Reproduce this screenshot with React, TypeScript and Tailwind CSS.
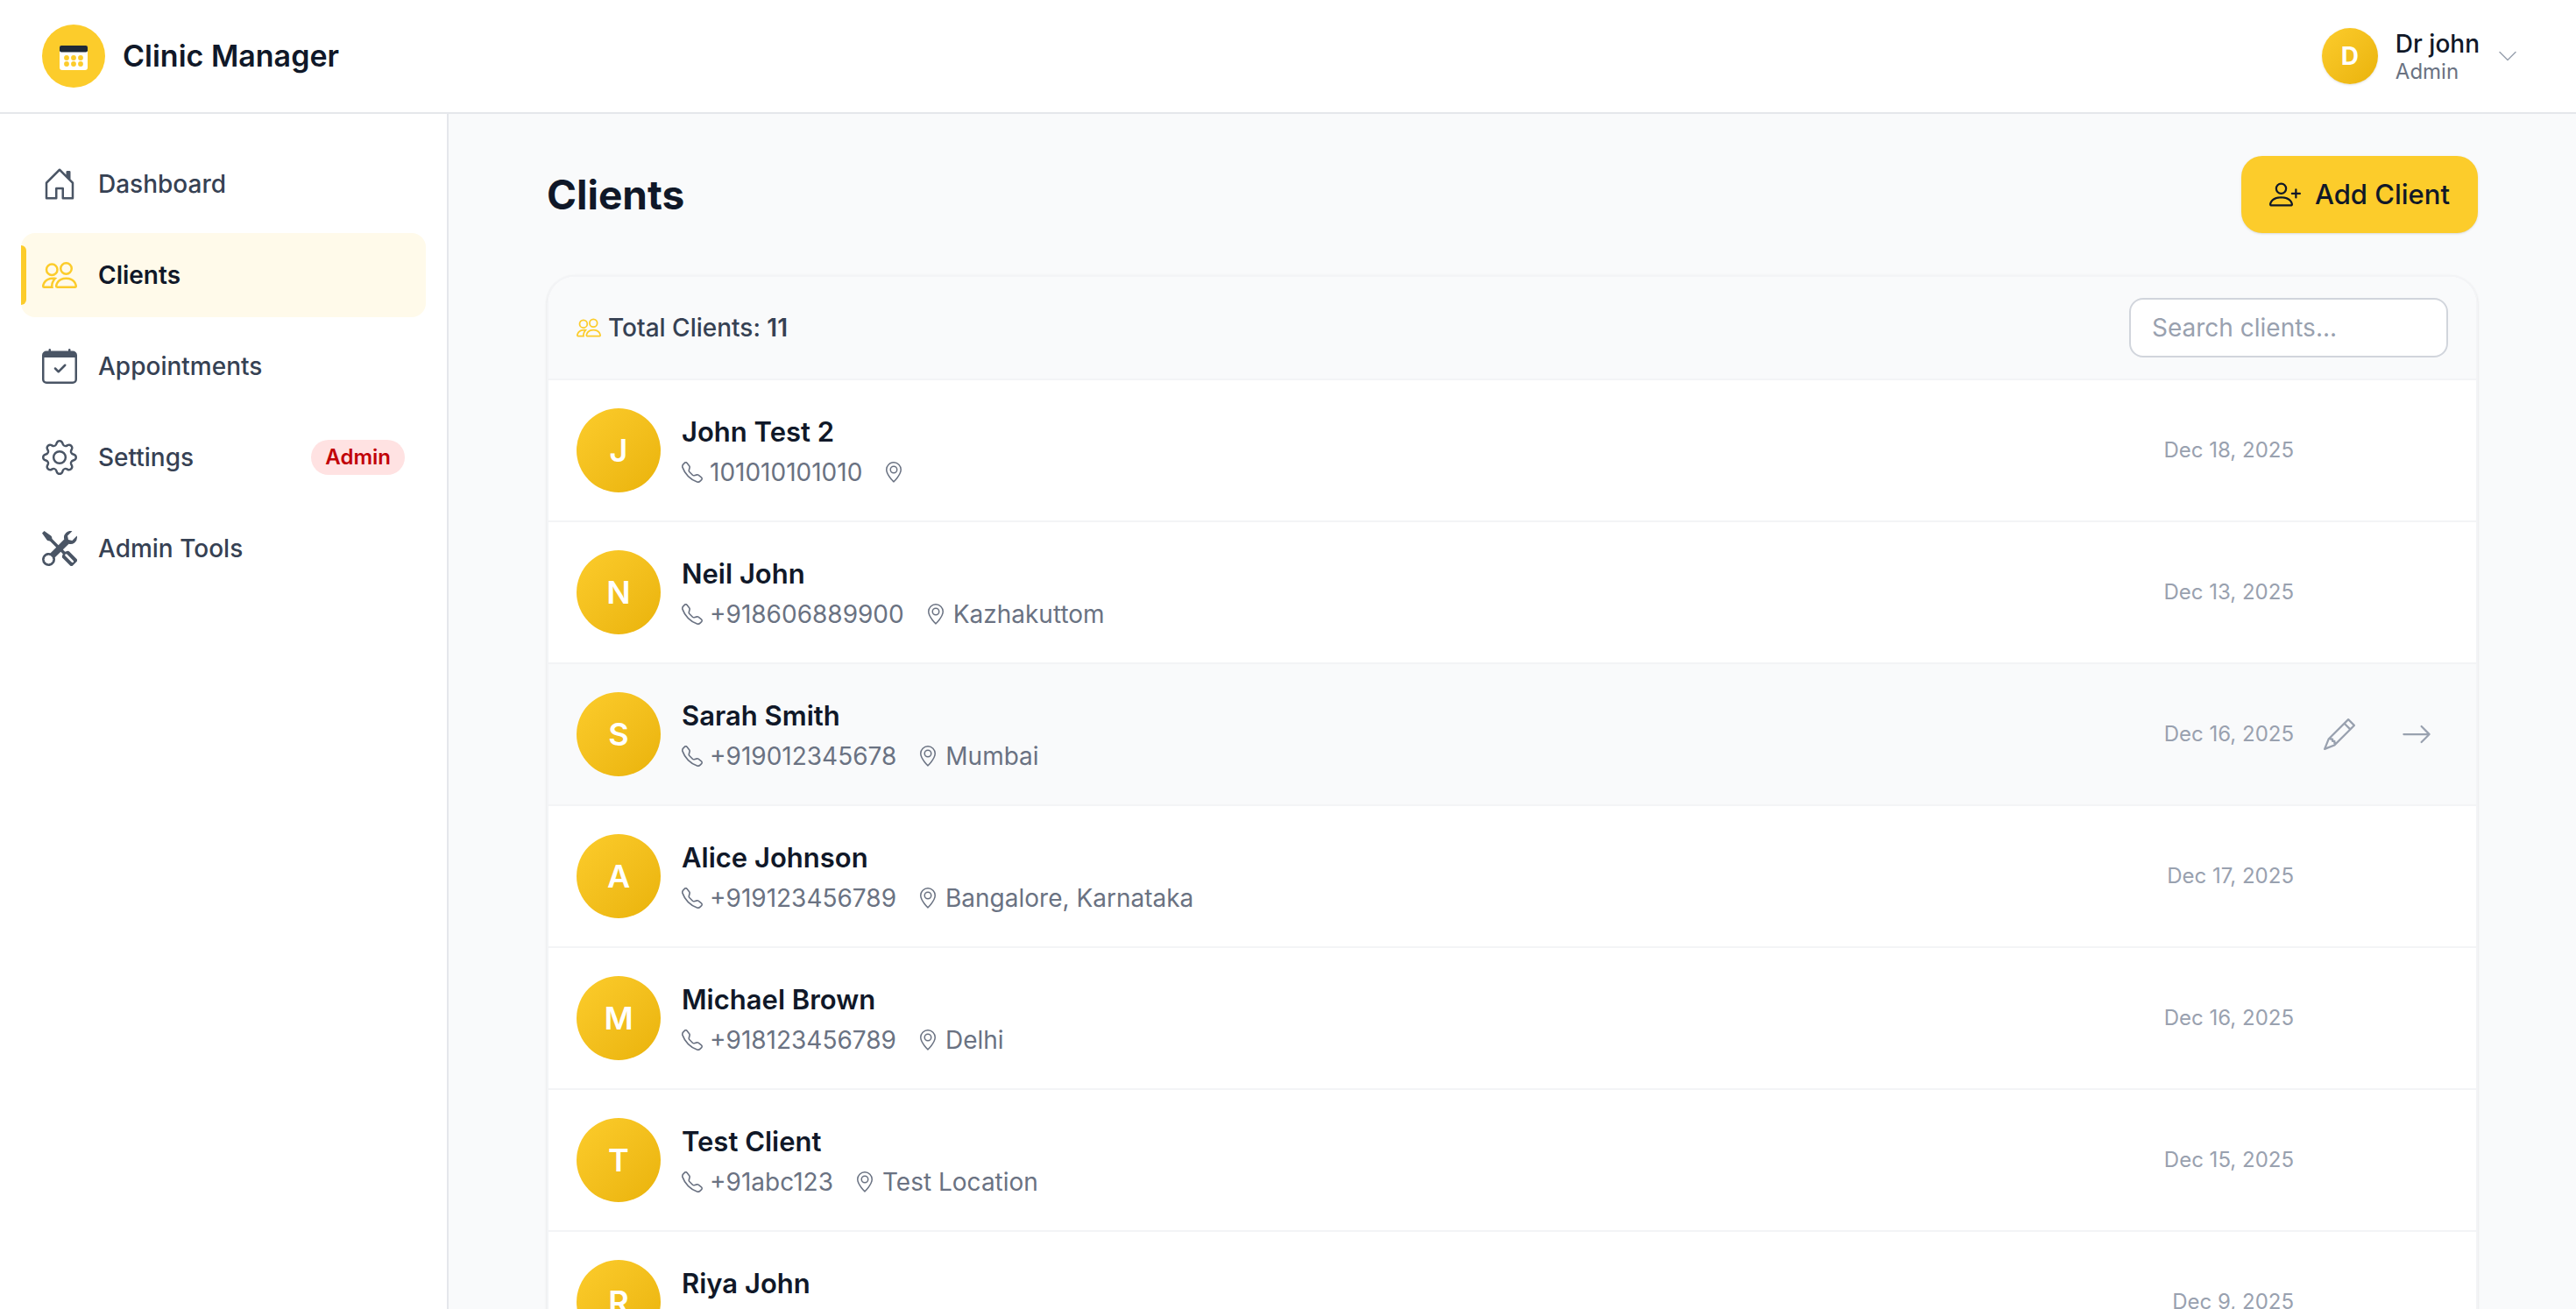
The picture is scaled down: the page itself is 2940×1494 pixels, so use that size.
import { useState } from 'react';
import type { IconType } from 'react-icons';
import {
  BsArrowRight,
  BsCalendarCheck,
  BsChevronDown,
  BsGear,
  BsGeoAlt,
  BsHouseDoor,
  BsPencil,
  BsPeople,
  BsPersonPlus,
  BsTelephone,
  BsTools,
} from 'react-icons/bs';

interface NavItem {
  label: string;
  icon: IconType;
  badge?: string;
}

interface Client {
  name: string;
  phone: string;
  location: string;
  date: string;
}

const navItems: NavItem[] = [
  { label: 'Dashboard', icon: BsHouseDoor },
  { label: 'Clients', icon: BsPeople },
  { label: 'Appointments', icon: BsCalendarCheck },
  { label: 'Settings', icon: BsGear, badge: 'Admin' },
  { label: 'Admin Tools', icon: BsTools },
];

const clients: Client[] = [
  { name: 'John Test 2', phone: '101010101010', location: '', date: 'Dec 18, 2025' },
  { name: 'Neil John', phone: '+918606889900', location: 'Kazhakuttom', date: 'Dec 13, 2025' },
  { name: 'Sarah Smith', phone: '+919012345678', location: 'Mumbai', date: 'Dec 16, 2025' },
  { name: 'Alice Johnson', phone: '+919123456789', location: 'Bangalore, Karnataka', date: 'Dec 17, 2025' },
  { name: 'Michael Brown', phone: '+918123456789', location: 'Delhi', date: 'Dec 16, 2025' },
  { name: 'Test Client', phone: '+91abc123', location: 'Test Location', date: 'Dec 15, 2025' },
  { name: 'Riya John', phone: '', location: '', date: 'Dec 9, 2025' },
];

const totalClients = 11;

const Logo = () => (
  <svg viewBox="0 0 72 72" className="size-18" aria-hidden="true">
    <circle cx="36" cy="36" r="36" fill="#fccc2b" />
    <rect x="20" y="24" width="32" height="28" rx="3" fill="#fff" />
    <rect x="20" y="24" width="32" height="7.5" rx="2" fill="#1f2937" />
    {[38, 45].map((cy) =>
      [28, 36, 44].map((cx) => <circle key={`${cx}-${cy}`} cx={cx} cy={cy} r="2.9" fill="#fccc2b" />)
    )}
  </svg>
);

const Header = () => (
  <header className="flex h-[130px] shrink-0 items-center justify-between border-b-2 border-gray-200 bg-white px-12">
    <div className="flex items-center gap-5">
      <Logo />
      <span className="text-[34px] leading-12 font-semibold text-gray-900">Clinic Manager</span>
    </div>

    <button className="flex items-center gap-5 rounded-2xl px-[18px] text-left">
      <span className="flex size-16 items-center justify-center rounded-full bg-linear-135 from-[#fccc2b] to-[#eab308] text-[28px] font-bold text-white shadow-sm">
        D
      </span>
      <span className="flex flex-col pt-1">
        <span className="text-[28px] leading-8 font-medium text-gray-900">Dr john</span>
        <span className="text-[24px] leading-8 text-gray-500">Admin</span>
      </span>
      <BsChevronDown className="size-6 text-gray-400" />
    </button>
  </header>
);

const Sidebar = () => (
  <aside className="w-[512px] shrink-0 border-r-2 border-gray-200 bg-white">
    <nav className="flex flex-col gap-2 px-6 py-8">
      {navItems.map(({ label, icon: Icon, badge }) => {
        const active = label === 'Clients';
        return (
          <a
            key={label}
            href="#"
            aria-current={active ? 'page' : undefined}
            className={
              active
                ? 'relative flex h-24 items-center gap-6 rounded-2xl bg-[#fffaea] px-6 text-[28px] font-semibold text-gray-900'
                : 'relative flex h-24 items-center gap-6 rounded-2xl px-6 text-[28px] font-medium text-gray-700'
            }
          >
            {/* Active marker */}
            {active && <span className="absolute inset-y-3.5 left-0 w-1.5 rounded-r-md bg-[#fccc2b]" />}
            <Icon className={active ? 'size-10 text-[#fccc2b]' : 'size-10 text-gray-600'} />
            <span className="flex-1">{label}</span>
            {badge && (
              <span className="rounded-full bg-red-100 px-4 text-[24px] leading-10 font-semibold text-red-700">
                {badge}
              </span>
            )}
          </a>
        );
      })}
    </nav>
  </aside>
);

interface ClientRowProps {
  client: Client;
  active: boolean;
  onHover: () => void;
}

const ClientRow = ({ client, active, onHover }: ClientRowProps) => (
  <li
    onMouseEnter={onHover}
    className={
      active
        ? 'flex items-center gap-6 border-b-2 border-gray-100 bg-gray-50 p-8'
        : 'flex items-center gap-6 border-b-2 border-gray-100 p-8'
    }
  >
    <span className="flex size-24 items-center justify-center rounded-full bg-linear-135 from-[#fccc2b] to-[#eab308] text-[36px] font-semibold text-white">
      {client.name[0]}
    </span>

    <div className="flex h-24 flex-1 flex-col justify-center gap-0.5">
      <h2 className="text-[31px] leading-12 font-semibold text-gray-900">{client.name}</h2>
      <div className="flex h-10 items-center gap-6 text-[28px] leading-10 text-gray-500">
        <span className="flex items-center gap-2">
          <BsTelephone className="size-6" />
          {client.phone}
        </span>
        <span className="flex items-center gap-2">
          <BsGeoAlt className="size-6" />
          {client.location}
        </span>
      </div>
    </div>

    <div className="flex items-center gap-4 text-gray-400">
      <time className="text-[24px] leading-8">{client.date}</time>
      {/* Row actions only show on the hovered row */}
      <div className={active ? 'flex gap-4' : 'flex gap-4 opacity-0'}>
        <button aria-label="Edit client" className="rounded-xl p-[18px]">
          <BsPencil className="size-9" />
        </button>
        <button aria-label="Open client" className="rounded-xl p-[18px]">
          <BsArrowRight className="size-9" />
        </button>
      </div>
    </div>
  </li>
);

const App = () => {
  const [hovered, setHovered] = useState('Sarah Smith');

  return (
    <div className="flex h-screen flex-col overflow-hidden bg-gray-50 font-['Inter',sans-serif] text-gray-900">
      <Header />

      <div className="flex min-h-0 flex-1">
        <Sidebar />

        <main className="flex-1 overflow-y-auto px-28 py-12 [scrollbar-width:none]">
          <div className="flex items-center justify-between">
            <h1 className="text-[46px] leading-14 font-bold">Clients</h1>
            <button className="flex h-22 items-center gap-4 rounded-3xl bg-[#fccc2b] px-8 text-[31px] font-medium shadow-sm">
              <BsPersonPlus className="size-9" />
              Add Client
            </button>
          </div>

          <section className="mt-12 overflow-hidden rounded-[32px] border-2 border-gray-100 bg-white shadow-sm">
            <div className="flex items-center justify-between border-b-2 border-gray-100 bg-gray-50 px-8 py-6">
              <p className="flex items-center gap-2 text-[28px] leading-10 font-medium text-gray-700">
                <BsPeople className="size-7 text-[#fccc2b]" />
                <span>
                  Total Clients: <span className="font-semibold">{totalClients}</span>
                </span>
              </p>
              <input
                type="search"
                aria-label="Search clients"
                placeholder="Search clients..."
                className="h-17 w-[364px] rounded-2xl border-2 border-gray-300 bg-white px-6 text-[28px] placeholder:text-gray-400"
              />
            </div>

            <ul>
              {clients.map((client) => (
                <ClientRow
                  key={client.name}
                  client={client}
                  active={hovered === client.name}
                  onHover={() => setHovered(client.name)}
                />
              ))}
            </ul>
          </section>
        </main>
      </div>
    </div>
  );
};

export default App;
